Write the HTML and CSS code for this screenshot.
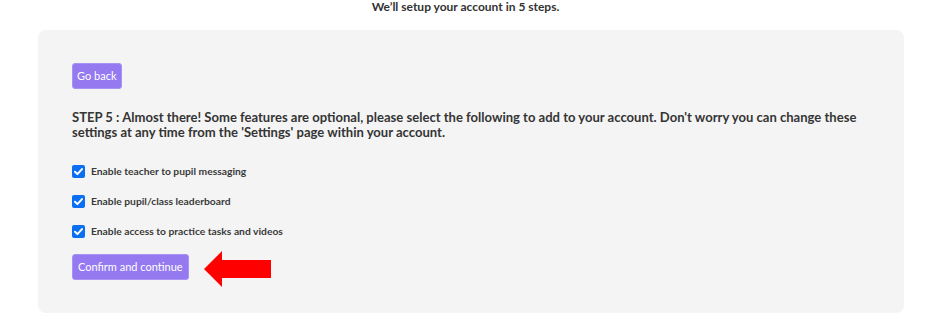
FILE: index.html
```html
<!DOCTYPE html>
<html lang="en">
<head>
<meta charset="utf-8">
<title>Setup</title>
<link rel="stylesheet" href="styles.css">
</head>
<body>
<div class="page">
  <p class="intro">We’ll setup your account in 5 steps.</p>
  <section class="card">
    <button class="btn btn-back" type="button">Go back</button>
    <p class="step">STEP 5 : Almost there! Some features are optional, please select the following to add to your account. Don't worry you can change these settings at any time from the 'Settings' page within your account.</p>
    <ul class="options">
      <li><label class="opt"><span class="box"><svg viewBox="0 0 13 13" width="13" height="13"><path d="M3 6.8 L5.4 9.1 L10 4.1" fill="none" stroke="#fff" stroke-width="2" stroke-linecap="round" stroke-linejoin="round"/></svg></span>Enable teacher to pupil messaging</label></li>
      <li><label class="opt"><span class="box"><svg viewBox="0 0 13 13" width="13" height="13"><path d="M3 6.8 L5.4 9.1 L10 4.1" fill="none" stroke="#fff" stroke-width="2" stroke-linecap="round" stroke-linejoin="round"/></svg></span>Enable pupil/class leaderboard</label></li>
      <li><label class="opt"><span class="box"><svg viewBox="0 0 13 13" width="13" height="13"><path d="M3 6.8 L5.4 9.1 L10 4.1" fill="none" stroke="#fff" stroke-width="2" stroke-linecap="round" stroke-linejoin="round"/></svg></span>Enable access to practice tasks and videos</label></li>
    </ul>
    <div class="actions">
      <button class="btn" type="button">Confirm and continue</button>
      <svg class="arrow" viewBox="0 0 67 36" width="67" height="36"><polygon points="0,18 18,0 18,9 67,9 67,27 18,27 18,36" fill="#ff0000"/></svg>
    </div>
  </section>
</div>
</body>
</html>
```

FILE: styles.css
```css
* { box-sizing: border-box; }
html, body { margin: 0; padding: 0; background: #fff; }
body {
  font-family: Lato, "Noto Sans", sans-serif;
  color: #343434;
}
.page {
  width: 931px;
  height: 327px;
  overflow: hidden;
}
.intro {
  margin: 0;
  height: 30px;
  text-align: center;
  font-size: 12px;
  line-height: 13px;
  font-weight: 700;
  color: #333;
}
.card {
  width: 866px;
  height: 283px;
  margin-left: 38px;
  background: #f4f4f4;
  border-radius: 8px;
  padding: 33px 34px;
  display: flex;
  flex-direction: column;
  align-items: flex-start;
}
.btn {
  font-family: inherit;
  background: #9479f0;
  color: #fff;
  border: 1px solid #a892f4;
  border-radius: 3px;
  height: 26px;
  padding: 0 5px;
  font-size: 11px;
  font-weight: 400;
  line-height: 24px;
  cursor: pointer;
}
.btn-back {
  padding: 0 4px;
}
.step {
  margin: 21px 0 0;
  font-size: 13.05px;
  line-height: 15px;
  font-weight: 700;
  color: #343434;
}
.options {
  list-style: none;
  margin: 25px 0 0;
  padding: 0;
  display: flex;
  flex-direction: column;
  gap: 17px;
}
.opt {
  display: flex;
  align-items: center;
  gap: 6px;
  font-size: 10.3px;
  line-height: 13px;
  font-weight: 700;
  color: #3a3a3a;
}
.box {
  width: 13px;
  height: 13px;
  border-radius: 2px;
  background: #0b6ff2;
  display: inline-flex;
}
.actions {
  margin-top: 11px;
  height: 36px;
  display: flex;
  align-items: center;
  gap: 15px;
}
.arrow {
  margin-top: 4px;
}
```
